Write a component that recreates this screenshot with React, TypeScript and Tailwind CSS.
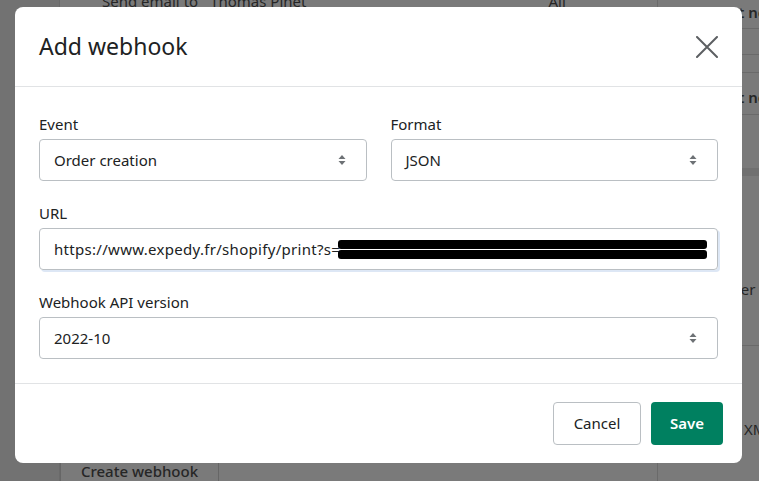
const font = { fontFamily: '"Segoe UI", "Noto Sans", "Open Sans", sans-serif' };

const SelectArrows = () => (
  <svg width="8" height="12" viewBox="0 0 8 12" className="shrink-0">
    <path d="M4 1 L7.5 5 H0.5 Z" fill="#6d7175" />
    <path d="M4 11 L7.5 7 H0.5 Z" fill="#6d7175" />
  </svg>
);

const CloseIcon = () => (
  <svg width="22" height="22" viewBox="0 0 22 22" className="shrink-0">
    <path d="M1 1 L21 21 M21 1 L1 21" stroke="#5c5f62" strokeWidth="2" strokeLinecap="round" />
  </svg>
);

const Select = ({ value }: { value: string }) => (
  <div className="h-[42px] flex items-center justify-between pl-[14px] pr-[20px] border border-[#babfc3] rounded-[4px] text-[15px] text-[#202223] bg-white">
    <span>{value}</span>
    <SelectArrows />
  </div>
);

const Field = ({ label, children }: { label: string; children: React.ReactNode }) => (
  <div className="flex flex-col">
    <label className="text-[15px] leading-[20px] text-[#202223] mb-[5px]">{label}</label>
    {children}
  </div>
);

const Background = () => (
  <div className="absolute inset-0 flex bg-[#7a7a7a] text-[#262626]" style={font}>
    <div className="w-[60px] bg-[#727272] border-r border-[#6a6a6a]"></div>
    <div className="flex-1 flex flex-col justify-between">
      <div className="flex text-[15px] leading-[20px] -mt-[9px] pl-[42px] whitespace-nowrap">
        <span>Send email to</span>
        <span className="ml-[12px]">Thomas Pinet</span>
        <span className="ml-[242px]">All</span>
      </div>
      <div className="flex">
        <div className="w-[159px] h-[18px] border-x border-[#666] flex items-start justify-center text-[15px] leading-[16px] font-medium">
          Create webhook
        </div>
      </div>
    </div>
    <div className="w-[102px] border-l border-[#6a6a6a] flex flex-col text-[15px] text-[#262626] whitespace-nowrap">
      <div className="h-[29px] border-b border-[#6a6a6a] pl-[18px] leading-[24px] font-semibold">Send test notification</div>
      <div className="h-[26px] border-b border-[#6a6a6a]"></div>
      <div className="h-[18px] border-b border-[#6a6a6a]"></div>
      <div className="h-[42px] border-b border-[#6a6a6a] pl-[18px] leading-[48px] font-semibold">Send test notification</div>
      <div className="h-[53px]"></div>
      <div className="h-[8px] bg-[#707070]"></div>
      <div className="h-[170px] border-b border-[#6a6a6a] pl-[56px] pt-[102px]">Order</div>
      <div className="flex-1 pl-[86px] pt-[72px]">XML</div>
    </div>
  </div>
);

export default function App() {
  return (
    <div className="relative w-[759px] h-[481px] overflow-hidden" style={font}>
      <Background />
      <div className="absolute left-[15px] top-[7px] w-[727px] h-[456px] bg-white rounded-[8px] flex flex-col overflow-hidden">
        <div className="h-[80px] shrink-0 flex items-center justify-between pl-[24px] pr-[24px] border-b border-[#e1e3e5]">
          <h2 className="text-[23px] text-[#202223] font-normal">Add webhook</h2>
          <CloseIcon />
        </div>

        <div className="flex-1 flex flex-col gap-[22px] px-[24px] pt-[27px] border-b border-[#e1e3e5]">
          <div className="grid grid-cols-2 gap-[24px]">
            <Field label="Event">
              <Select value="Order creation" />
            </Field>
            <Field label="Format">
              <Select value="JSON" />
            </Field>
          </div>

          <Field label="URL">
            <div className="h-[42px] flex items-center pl-[14px] pr-[10px] border border-[#babfc3] rounded-[4px] text-[15px] text-[#202223] shadow-[2px_2px_0_0_#dde7f5] whitespace-nowrap overflow-hidden">
              <span className="tracking-[0.3px]">https://www.expedy.fr/shopify/print?s=</span>
              <span className="flex-1 flex flex-col gap-[1px] ml-[-2px]">
                <span className="h-[9px] bg-black rounded-[3px]"></span>
                <span className="h-[9px] bg-black rounded-[3px]"></span>
              </span>
            </div>
          </Field>

          <Field label="Webhook API version">
            <Select value="2022-10" />
          </Field>
        </div>

        <div className="h-[79px] shrink-0 flex items-center justify-end gap-[10px] pr-[19px]">
          <button className="h-[43px] w-[88px] border border-[#babfc3] rounded-[4px] text-[15px] text-[#202223] bg-white">
            Cancel
          </button>
          <button className="h-[43px] w-[72px] rounded-[4px] text-[15px] text-white font-semibold bg-[#008060]">
            Save
          </button>
        </div>
      </div>
    </div>
  );
}
